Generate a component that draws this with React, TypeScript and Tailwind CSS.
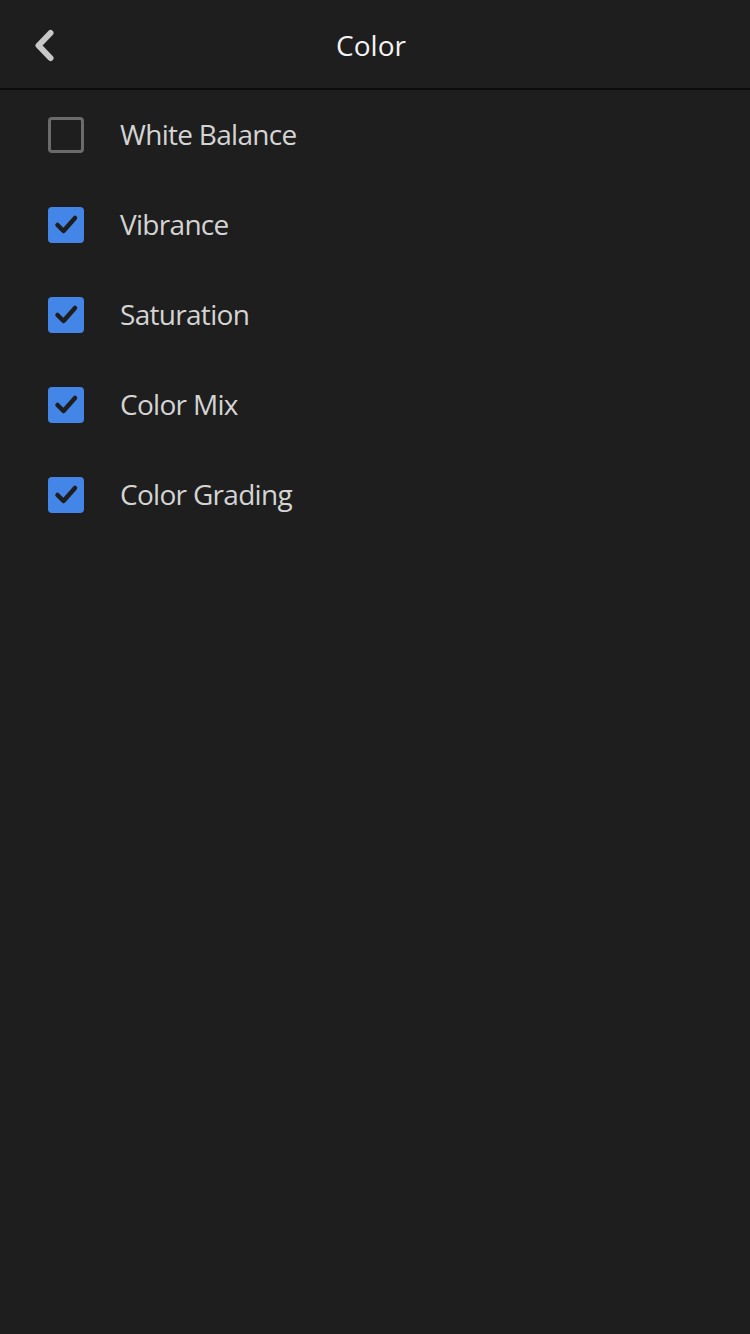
import React, { useState } from "react";

const items = [
    { label: "White Balance", checked: false },
    { label: "Vibrance", checked: true },
    { label: "Saturation", checked: true },
    { label: "Color Mix", checked: true },
    { label: "Color Grading", checked: true },
];

export default function App() {
    const [rows, setRows] = useState(items);

    const toggle = (i: number) => {
        setRows(prev => prev.map((r, idx) => (idx === i ? { ...r, checked: !r.checked } : r)));
    };

    return (
        <div className="min-h-[1334px] w-[750px] bg-[#1e1e1e] font-['Open_Sans',sans-serif]">
            {/* Header */}
            <div className="h-[88px] flex items-center relative border-b-2 border-[#0c0c0c] box-content">
                <button className="absolute left-[30px] top-[25px] w-[30px] h-[40px]">
                    <svg width="30" height="40" viewBox="0 0 30 40" fill="none">
                        <path d="M20.5 8 L8.5 20.5 L20.5 33" stroke="#c8c8c8" strokeWidth="6" strokeLinecap="round" strokeLinejoin="round" />
                    </svg>
                </button>
                <h1 className="flex-1 text-center text-[28px] text-[#f2f2f2] pr-[8px] pt-[1px]">Color</h1>
            </div>

            {/* List */}
            <div className="flex flex-col">
                {rows.map((r, i) => (
                    <div key={r.label} className="h-[90px] flex items-center pl-[48px] cursor-pointer" onClick={() => toggle(i)}>
                        {r.checked ? (
                            <div className="w-[36px] h-[36px] rounded-[4px] bg-[#4486e8]">
                                <svg width="36" height="36" viewBox="0 0 36 36" fill="none">
                                    <path d="M9.5 18 L15.5 24 L27 11" stroke="#1e1e1e" strokeWidth="4.5" strokeLinecap="round" strokeLinejoin="round" />
                                </svg>
                            </div>
                        ) : (
                            <div className="w-[36px] h-[36px] rounded-[4px] border-[3px] border-[#6b6b6b]" />
                        )}
                        <span className="ml-[36px] text-[28px] text-[#d4d4d4] tracking-tight -mt-[2px]">{r.label}</span>
                    </div>
                ))}
            </div>
        </div>
    );
}
